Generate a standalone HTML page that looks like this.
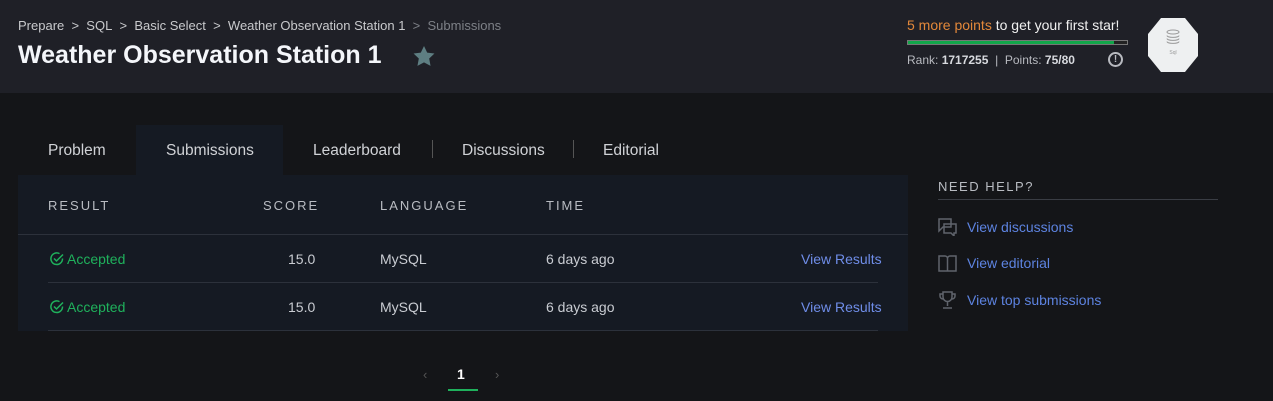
<!DOCTYPE html>
<html><head><meta charset="utf-8"><style>
*{margin:0;padding:0;box-sizing:border-box}
body{width:1273px;height:401px;background:#141518;font-family:"Liberation Sans",sans-serif;position:relative;overflow:hidden;color:#e6e6e6}
.a{position:absolute;white-space:nowrap}
#hdr{position:absolute;left:0;top:0;width:1273px;height:93px;background:#1f2027}
.bc{font-size:13px;color:#c8c9cc;top:18px}
.tab{font-size:15.5px;color:#d0d2d6;top:142px}
.th{font-size:13px;letter-spacing:2px;color:#b9bcc2;top:198px}
.td{font-size:14px;color:#c9ccd2}
.acc{font-size:14px;color:#1fb15c}
.vr{font-size:14px;color:#6f8de8}
.link{font-size:14px;color:#5d83e0}
</style></head><body>
<div id="hdr"></div>
<div class="a bc" style="left:18px">Prepare&nbsp; &gt; &nbsp;SQL&nbsp; &gt; &nbsp;Basic Select&nbsp; &gt; &nbsp;Weather Observation Station 1&nbsp; <span style="color:#7d8087">&gt; &nbsp;Submissions</span></div>
<div class="a" style="left:18px;top:41px;font-size:25px;font-weight:bold;color:#f4f6fa">Weather Observation Station 1</div>
<svg class="a" style="left:413px;top:46px" width="22" height="20" viewBox="0 0 24 22"><path d="M12 0l3.5 7.3 8 1-5.8 5.5 1.5 8L12 18l-7.2 3.8 1.5-8L.5 8.3l8-1z" fill="#5e7e82"/></svg>
<div class="a" style="left:907px;top:17px;font-size:14px;color:#f0f0f0"><span style="color:#e3883a">5 more points</span> to get your first star!</div>
<div class="a" style="left:907px;top:40px;width:221px;height:5px;border:1px solid #777;background:#222"><div style="width:206px;height:3px;background:#12a64a"></div></div>
<div class="a" style="left:907px;top:53px;font-size:12px;color:#b8bac0">Rank: <b style="color:#d8dadf">1717255</b> &nbsp;|&nbsp; Points: <b style="color:#d8dadf">75/80</b></div>
<div class="a" style="left:1108px;top:52px;width:15px;height:15px;border:2px solid #b8bac0;border-radius:50%;font-size:10px;font-weight:bold;color:#b8bac0;text-align:center;line-height:11px">!</div>
<svg class="a" style="left:1147px;top:17px" width="52" height="56" viewBox="0 0 52 56"><path d="M14 1h24l13 16v22L38 55H14L1 39V17z" fill="#eef0f1"/><g fill="none" stroke="#999"><ellipse cx="26" cy="15" rx="6" ry="2"/><path d="M20 18.5c0 2.5 12 2.5 12 0M20 21.5c0 2.5 12 2.5 12 0M20 24.5c0 2.5 12 2.5 12 0"/></g><text x="26" y="37" font-size="5" fill="#999" text-anchor="middle" font-family="Liberation Sans">Sql</text></svg>

<div class="a" style="left:136px;top:125px;width:147px;height:50px;background:#151a23"></div>
<div class="a tab" style="left:48px">Problem</div>
<div class="a tab" style="left:166px">Submissions</div>
<div class="a tab" style="left:313px">Leaderboard</div>
<div class="a" style="left:432px;top:140px;width:1px;height:18px;background:#555"></div>
<div class="a tab" style="left:462px">Discussions</div>
<div class="a" style="left:573px;top:140px;width:1px;height:18px;background:#555"></div>
<div class="a tab" style="left:603px">Editorial</div>

<div class="a" style="left:18px;top:175px;width:890px;height:156px;background:#151a23"></div>
<div class="a th" style="left:48px">RESULT</div>
<div class="a th" style="left:263px">SCORE</div>
<div class="a th" style="left:380px">LANGUAGE</div>
<div class="a th" style="left:546px">TIME</div>
<div class="a" style="left:18px;top:234px;width:890px;height:1px;background:#2c313b"></div>
<div class="a" style="left:48px;top:282px;width:830px;height:1px;background:#2c313b"></div>
<div class="a" style="left:48px;top:330px;width:830px;height:1px;background:#2c313b"></div>

<svg class="a" style="left:50px;top:252px" width="14" height="14" viewBox="0 0 14 14"><path d="M12.5 6.5A5.8 5.8 0 1 1 9.5 1.6" fill="none" stroke="#1fb15c" stroke-width="1.5"/><path d="M4 6.5l2.5 2.5L13 2.5" fill="none" stroke="#1fb15c" stroke-width="1.5"/></svg>
<div class="a acc" style="left:67px;top:251px">Accepted</div>
<div class="a td" style="left:288px;top:251px">15.0</div>
<div class="a td" style="left:380px;top:251px">MySQL</div>
<div class="a td" style="left:546px;top:251px">6 days ago</div>
<div class="a vr" style="left:801px;top:251px">View Results</div>

<svg class="a" style="left:50px;top:300px" width="14" height="14" viewBox="0 0 14 14"><path d="M12.5 6.5A5.8 5.8 0 1 1 9.5 1.6" fill="none" stroke="#1fb15c" stroke-width="1.5"/><path d="M4 6.5l2.5 2.5L13 2.5" fill="none" stroke="#1fb15c" stroke-width="1.5"/></svg>
<div class="a acc" style="left:67px;top:299px">Accepted</div>
<div class="a td" style="left:288px;top:299px">15.0</div>
<div class="a td" style="left:380px;top:299px">MySQL</div>
<div class="a td" style="left:546px;top:299px">6 days ago</div>
<div class="a vr" style="left:801px;top:299px">View Results</div>

<div class="a" style="left:423px;top:367px;font-size:13px;color:#555">&lsaquo;</div>
<div class="a" style="left:457px;top:366px;font-size:14px;font-weight:bold;color:#fff">1</div>
<div class="a" style="left:448px;top:389px;width:30px;height:2px;background:#1fb15c"></div>
<div class="a" style="left:495px;top:367px;font-size:13px;color:#555">&rsaquo;</div>

<div class="a" style="left:938px;top:179px;font-size:13px;letter-spacing:1.5px;color:#b9bcc2">NEED HELP?</div>
<div class="a" style="left:938px;top:199px;width:280px;height:1px;background:#3a3d44"></div>
<svg class="a" style="left:938px;top:218px" width="20" height="18" viewBox="0 0 20 18" fill="none" stroke="#60646c" stroke-width="1.5"><path d="M1 1h12v8H5l-4 4z"/><path d="M6 6h12v9h-2v3l-3-3H6z"/></svg>
<div class="a link" style="left:967px;top:219px">View discussions</div>
<svg class="a" style="left:938px;top:255px" width="19" height="17" viewBox="0 0 19 17" fill="none" stroke="#60646c" stroke-width="1.5"><path d="M1 1h6a2.5 2.5 0 0 1 2.5 2.5V16H1zM18 1h-6a2.5 2.5 0 0 0-2.5 2.5V16H18z"/></svg>
<div class="a link" style="left:967px;top:255px">View editorial</div>
<svg class="a" style="left:939px;top:291px" width="17" height="18" viewBox="0 0 17 18" fill="none" stroke="#60646c" stroke-width="1.5"><path d="M4 1h9v5a4.5 4.5 0 0 1-9 0zM4 3H1v2a3 3 0 0 0 3 3M13 3h3v2a3 3 0 0 1-3 3M8.5 10.5V15M4 17h9"/></svg>
<div class="a link" style="left:967px;top:292px">View top submissions</div>
</body></html>
